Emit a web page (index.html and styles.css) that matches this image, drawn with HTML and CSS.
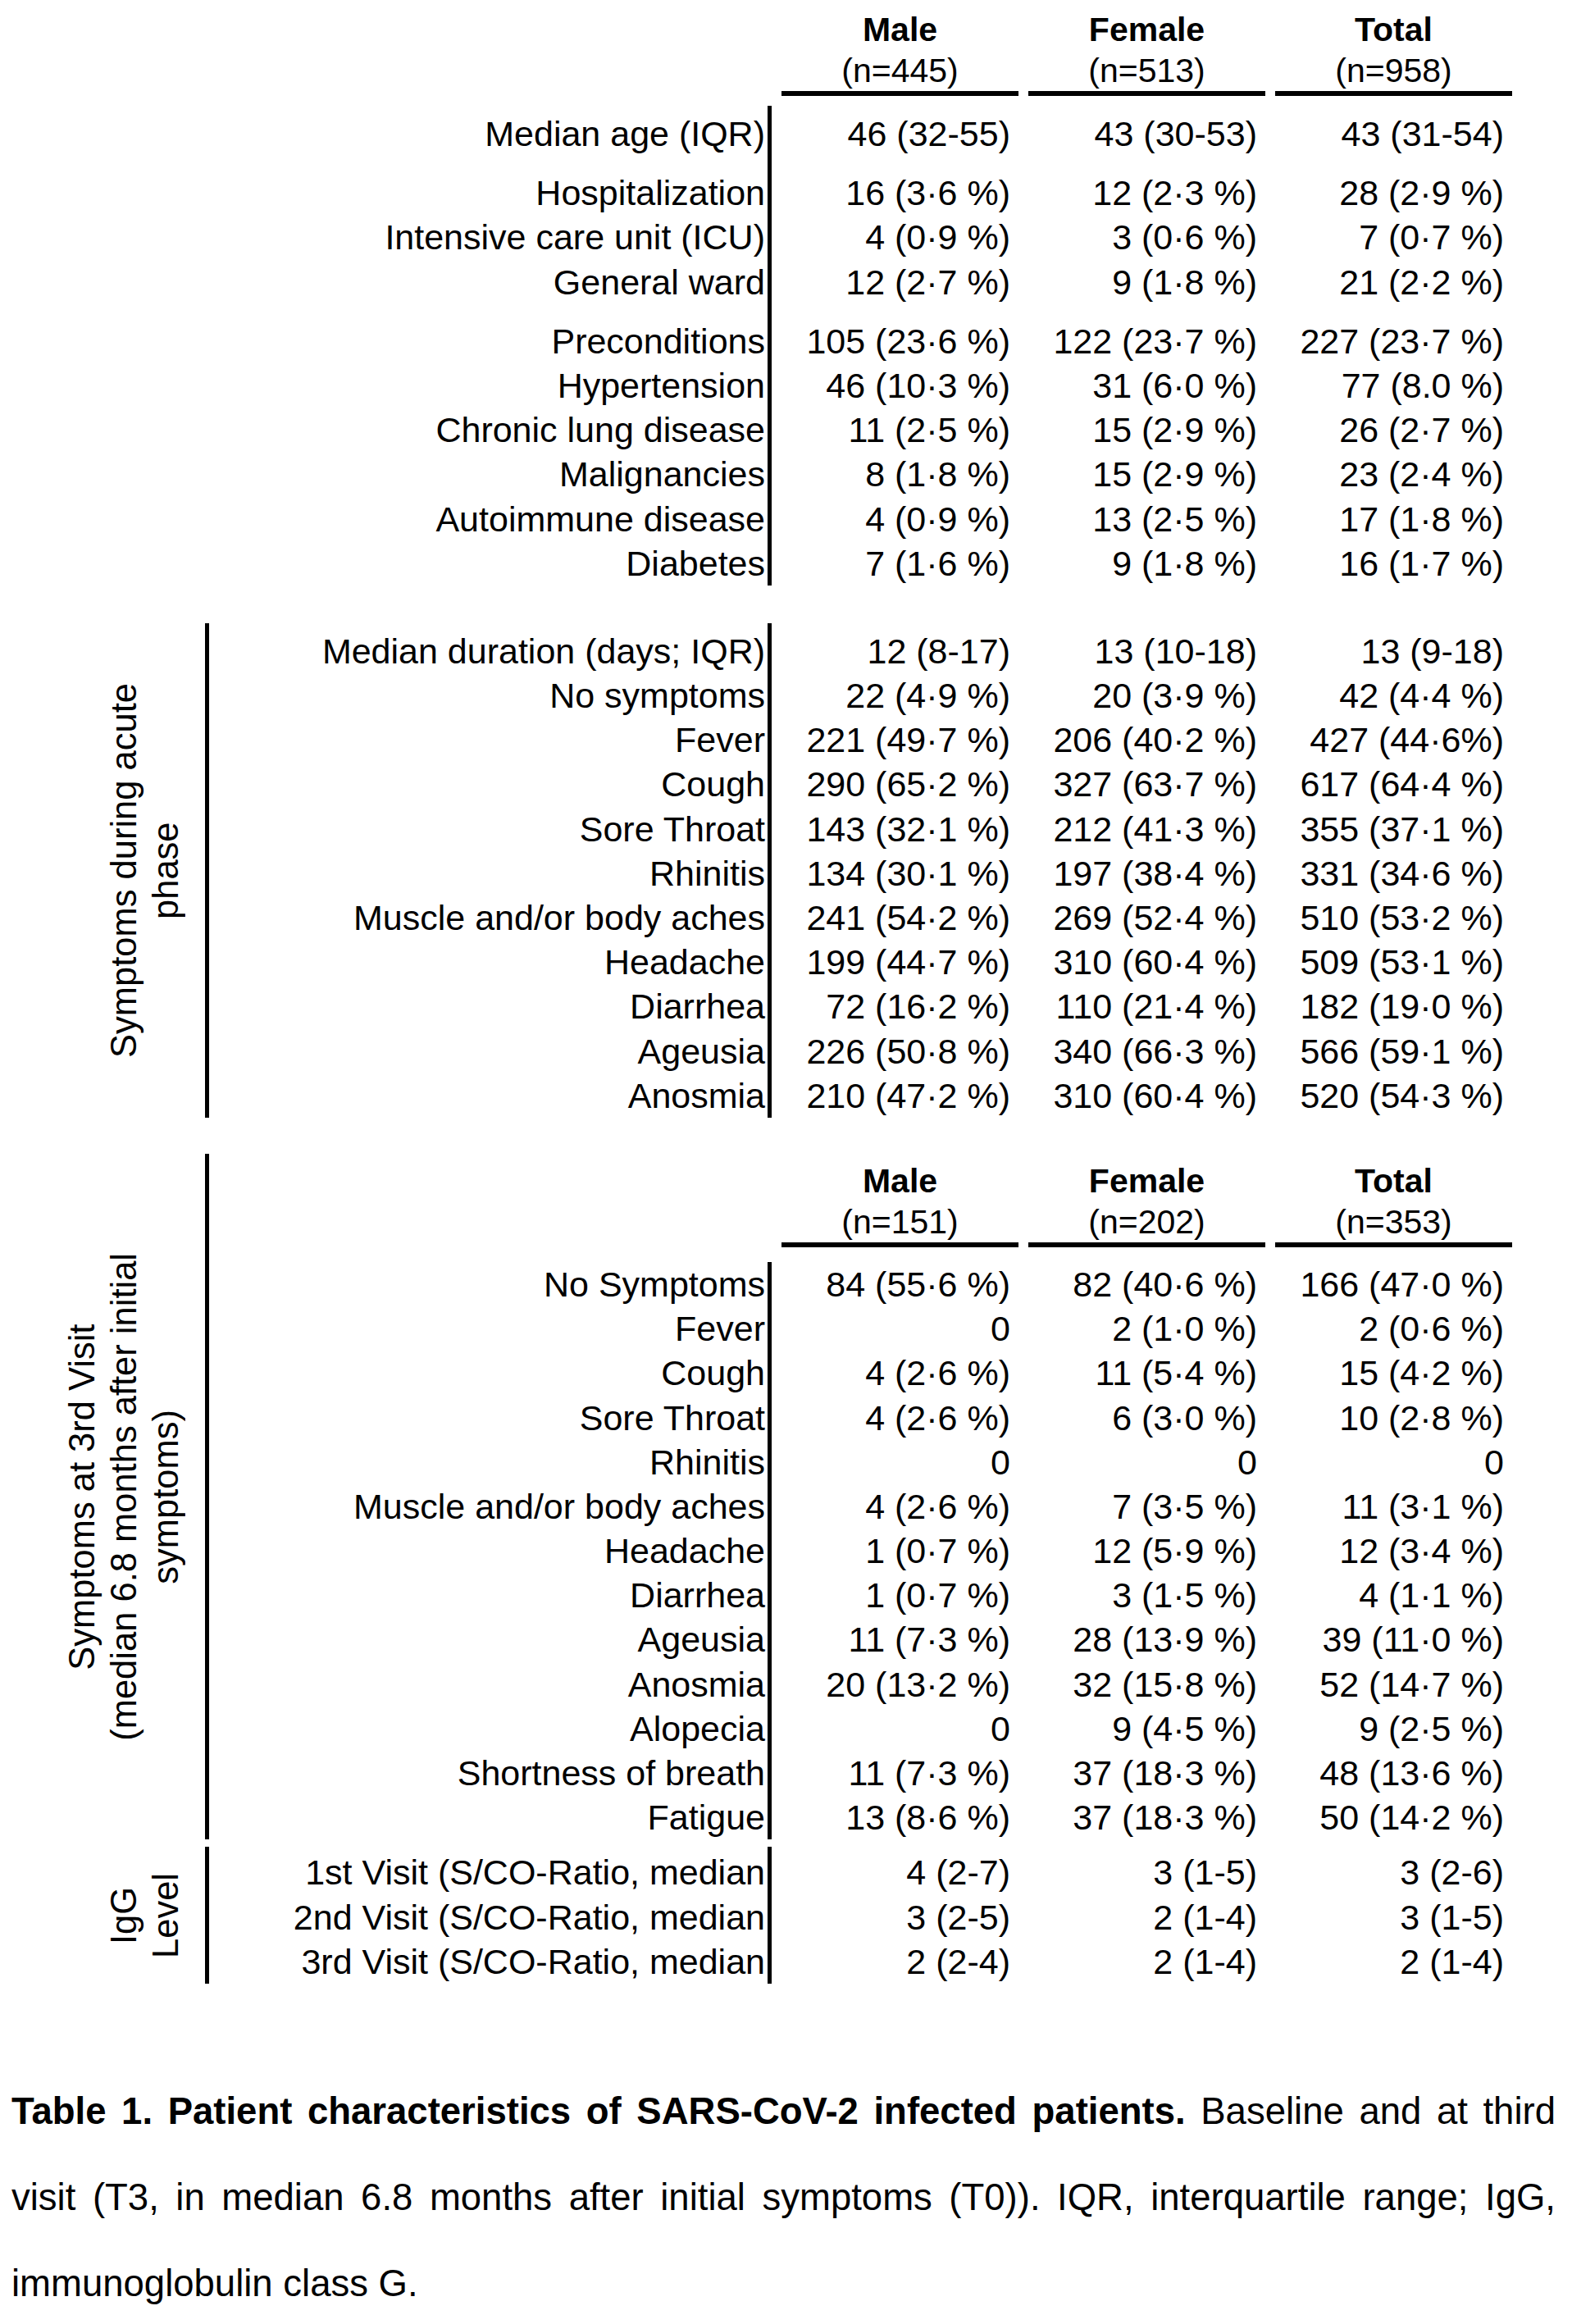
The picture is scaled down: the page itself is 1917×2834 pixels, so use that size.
FILE: index.html
```html
<!DOCTYPE html>
<html lang="en">
<head>
<meta charset="utf-8">
<title>Table 1. Patient characteristics</title>
<link rel="stylesheet" href="styles.css">
</head>
<body>
<div class="page">

  <section class="block block-base">
    <div class="group"></div>
    <div class="main">
      <div class="head">
        <div class="head-spacer"></div>
        <div class="hcell"><b>Male</b><br>(n=445)</div>
        <div class="hcell"><b>Female</b><br>(n=513)</div>
        <div class="hcell"><b>Total</b><br>(n=958)</div>
      </div>
      <div class="body body-base">
        <div class="labels">
          <div class="cell">Median age (IQR)</div>
          <div class="cell sep">Hospitalization</div>
          <div class="cell">Intensive care unit (ICU)</div>
          <div class="cell">General ward</div>
          <div class="cell sep">Preconditions</div>
          <div class="cell">Hypertension</div>
          <div class="cell">Chronic lung disease</div>
          <div class="cell">Malignancies</div>
          <div class="cell">Autoimmune disease</div>
          <div class="cell">Diabetes</div>
        </div>
        <div class="col">
          <div class="cell">46 (32-55)</div>
          <div class="cell sep">16 (3·6 %)</div>
          <div class="cell">4 (0·9 %)</div>
          <div class="cell">12 (2·7 %)</div>
          <div class="cell sep">105 (23·6 %)</div>
          <div class="cell">46 (10·3 %)</div>
          <div class="cell">11 (2·5 %)</div>
          <div class="cell">8 (1·8 %)</div>
          <div class="cell">4 (0·9 %)</div>
          <div class="cell">7 (1·6 %)</div>
        </div>
        <div class="col">
          <div class="cell">43 (30-53)</div>
          <div class="cell sep">12 (2·3 %)</div>
          <div class="cell">3 (0·6 %)</div>
          <div class="cell">9 (1·8 %)</div>
          <div class="cell sep">122 (23·7 %)</div>
          <div class="cell">31 (6·0 %)</div>
          <div class="cell">15 (2·9 %)</div>
          <div class="cell">15 (2·9 %)</div>
          <div class="cell">13 (2·5 %)</div>
          <div class="cell">9 (1·8 %)</div>
        </div>
        <div class="col">
          <div class="cell">43 (31-54)</div>
          <div class="cell sep">28 (2·9 %)</div>
          <div class="cell">7 (0·7 %)</div>
          <div class="cell">21 (2·2 %)</div>
          <div class="cell sep">227 (23·7 %)</div>
          <div class="cell">77 (8.0 %)</div>
          <div class="cell">26 (2·7 %)</div>
          <div class="cell">23 (2·4 %)</div>
          <div class="cell">17 (1·8 %)</div>
          <div class="cell">16 (1·7 %)</div>
        </div>
      </div>
    </div>
  </section>

  <section class="block block-acute">
    <div class="group ruled">
      <div class="vlabel">Symptoms during acute<br>phase</div>
    </div>
    <div class="main">
      <div class="body body-acute">
        <div class="labels">
          <div class="cell">Median duration (days; IQR)</div>
          <div class="cell">No symptoms</div>
          <div class="cell">Fever</div>
          <div class="cell">Cough</div>
          <div class="cell">Sore Throat</div>
          <div class="cell">Rhinitis</div>
          <div class="cell">Muscle and/or body aches</div>
          <div class="cell">Headache</div>
          <div class="cell">Diarrhea</div>
          <div class="cell">Ageusia</div>
          <div class="cell">Anosmia</div>
        </div>
        <div class="col">
          <div class="cell">12 (8-17)</div>
          <div class="cell">22 (4·9 %)</div>
          <div class="cell">221 (49·7 %)</div>
          <div class="cell">290 (65·2 %)</div>
          <div class="cell">143 (32·1 %)</div>
          <div class="cell">134 (30·1 %)</div>
          <div class="cell">241 (54·2 %)</div>
          <div class="cell">199 (44·7 %)</div>
          <div class="cell">72 (16·2 %)</div>
          <div class="cell">226 (50·8 %)</div>
          <div class="cell">210 (47·2 %)</div>
        </div>
        <div class="col">
          <div class="cell">13 (10-18)</div>
          <div class="cell">20 (3·9 %)</div>
          <div class="cell">206 (40·2 %)</div>
          <div class="cell">327 (63·7 %)</div>
          <div class="cell">212 (41·3 %)</div>
          <div class="cell">197 (38·4 %)</div>
          <div class="cell">269 (52·4 %)</div>
          <div class="cell">310 (60·4 %)</div>
          <div class="cell">110 (21·4 %)</div>
          <div class="cell">340 (66·3 %)</div>
          <div class="cell">310 (60·4 %)</div>
        </div>
        <div class="col">
          <div class="cell">13 (9-18)</div>
          <div class="cell">42 (4·4 %)</div>
          <div class="cell">427 (44·6%)</div>
          <div class="cell">617 (64·4 %)</div>
          <div class="cell">355 (37·1 %)</div>
          <div class="cell">331 (34·6 %)</div>
          <div class="cell">510 (53·2 %)</div>
          <div class="cell">509 (53·1 %)</div>
          <div class="cell">182 (19·0 %)</div>
          <div class="cell">566 (59·1 %)</div>
          <div class="cell">520 (54·3 %)</div>
        </div>
      </div>
    </div>
  </section>

  <section class="block block-visit">
    <div class="group ruled">
      <div class="vlabel">Symptoms at 3rd Visit<br>(median 6.8 months after initial<br>symptoms)</div>
    </div>
    <div class="main">
      <div class="head head-visit">
        <div class="head-spacer"></div>
        <div class="hcell"><b>Male</b><br>(n=151)</div>
        <div class="hcell"><b>Female</b><br>(n=202)</div>
        <div class="hcell"><b>Total</b><br>(n=353)</div>
      </div>
      <div class="body body-visit">
        <div class="labels">
          <div class="cell">No Symptoms</div>
          <div class="cell">Fever</div>
          <div class="cell">Cough</div>
          <div class="cell">Sore Throat</div>
          <div class="cell">Rhinitis</div>
          <div class="cell">Muscle and/or body aches</div>
          <div class="cell">Headache</div>
          <div class="cell">Diarrhea</div>
          <div class="cell">Ageusia</div>
          <div class="cell">Anosmia</div>
          <div class="cell">Alopecia</div>
          <div class="cell">Shortness of breath</div>
          <div class="cell">Fatigue</div>
        </div>
        <div class="col">
          <div class="cell">84 (55·6 %)</div>
          <div class="cell">0</div>
          <div class="cell">4 (2·6 %)</div>
          <div class="cell">4 (2·6 %)</div>
          <div class="cell">0</div>
          <div class="cell">4 (2·6 %)</div>
          <div class="cell">1 (0·7 %)</div>
          <div class="cell">1 (0·7 %)</div>
          <div class="cell">11 (7·3 %)</div>
          <div class="cell">20 (13·2 %)</div>
          <div class="cell">0</div>
          <div class="cell">11 (7·3 %)</div>
          <div class="cell">13 (8·6 %)</div>
        </div>
        <div class="col">
          <div class="cell">82 (40·6 %)</div>
          <div class="cell">2 (1·0 %)</div>
          <div class="cell">11 (5·4 %)</div>
          <div class="cell">6 (3·0 %)</div>
          <div class="cell">0</div>
          <div class="cell">7 (3·5 %)</div>
          <div class="cell">12 (5·9 %)</div>
          <div class="cell">3 (1·5 %)</div>
          <div class="cell">28 (13·9 %)</div>
          <div class="cell">32 (15·8 %)</div>
          <div class="cell">9 (4·5 %)</div>
          <div class="cell">37 (18·3 %)</div>
          <div class="cell">37 (18·3 %)</div>
        </div>
        <div class="col">
          <div class="cell">166 (47·0 %)</div>
          <div class="cell">2 (0·6 %)</div>
          <div class="cell">15 (4·2 %)</div>
          <div class="cell">10 (2·8 %)</div>
          <div class="cell">0</div>
          <div class="cell">11 (3·1 %)</div>
          <div class="cell">12 (3·4 %)</div>
          <div class="cell">4 (1·1 %)</div>
          <div class="cell">39 (11·0 %)</div>
          <div class="cell">52 (14·7 %)</div>
          <div class="cell">9 (2·5 %)</div>
          <div class="cell">48 (13·6 %)</div>
          <div class="cell">50 (14·2 %)</div>
        </div>
      </div>
    </div>
  </section>

  <section class="block block-igg">
    <div class="group ruled">
      <div class="vlabel">IgG<br>Level</div>
    </div>
    <div class="main">
      <div class="body body-igg">
        <div class="labels">
          <div class="cell">1st Visit (S/CO-Ratio, median</div>
          <div class="cell">2nd Visit (S/CO-Ratio, median</div>
          <div class="cell">3rd Visit (S/CO-Ratio, median</div>
        </div>
        <div class="col">
          <div class="cell">4 (2-7)</div>
          <div class="cell">3 (2-5)</div>
          <div class="cell">2 (2-4)</div>
        </div>
        <div class="col">
          <div class="cell">3 (1-5)</div>
          <div class="cell">2 (1-4)</div>
          <div class="cell">2 (1-4)</div>
        </div>
        <div class="col">
          <div class="cell">3 (2-6)</div>
          <div class="cell">3 (1-5)</div>
          <div class="cell">2 (1-4)</div>
        </div>
      </div>
    </div>
  </section>

  <p class="caption"><b>Table 1. Patient characteristics of SARS-CoV-2 infected patients.</b> Baseline and at third visit (T3, in median 6.8 months after initial symptoms (T0)). IQR, interquartile range; IgG, immunoglobulin class G.</p>

</div>
</body>
</html>
```

FILE: styles.css
```css
html, body {
  margin: 0;
  padding: 0;
  background: #ffffff;
}

body {
  font-family: "Liberation Sans", Arial, sans-serif;
  color: #000000;
  font-size: 43px;
}

.page {
  width: 1917px;
}

/* ---------- blocks ---------- */
.block {
  display: flex;
  align-items: stretch;
}

.block-base {
  padding-top: 11px;
}

.block-acute {
  margin-top: 46px;
}

.block-visit {
  margin-top: 44px;
}

.block-igg {
  margin-top: 9px;
}

/* ---------- group (rotated) column ---------- */
.group {
  flex: none;
  width: 255px;
  box-sizing: border-box;
  display: flex;
  align-items: center;
  justify-content: flex-end;
  padding-right: 22px;
}

.group.ruled {
  border-right: 5px solid #000000;
}

.vlabel {
  writing-mode: vertical-rl;
  transform: rotate(180deg);
  text-align: center;
  font-size: 43.5px;
  line-height: 51px;
  white-space: nowrap;
}

/* ---------- main area ---------- */
.main {
  display: flex;
  flex-direction: column;
}

.head {
  display: grid;
  grid-template-columns: 692px repeat(3, 301px);
}

.head-visit {
  padding-top: 8px;
}

.hcell {
  margin: 0 6px;
  border-bottom: 6px solid #000000;
  text-align: center;
  font-size: 41px;
  line-height: 50px;
  white-space: nowrap;
}

.hcell b {
  font-weight: 700;
}

/* ---------- body columns ---------- */
.body {
  display: flex;
}

.body-base {
  margin-top: 12px;
}

.body-base > *,
.body-acute > * {
  padding-top: 7px;
}

.body-visit {
  margin-top: 18px;
}

.body-igg > * {
  padding-top: 4px;
}

.labels {
  flex: none;
  width: 686px;
  box-sizing: border-box;
  border-right: 5px solid #000000;
  padding-right: 3px;
  margin-right: 6px;
  text-align: right;
}

.col {
  flex: none;
  width: 301px;
  box-sizing: border-box;
  padding-right: 16px;
  text-align: right;
}

.cell {
  height: 54.2px;
  line-height: 54.2px;
  white-space: nowrap;
}

.cell.sep {
  margin-top: 18px;
}

/* ---------- caption ---------- */
.caption {
  margin: 103px 0 0 14px;
  width: 1883px;
  font-size: 45.5px;
  line-height: 105px;
  text-align: justify;
}

.caption b {
  font-weight: 700;
}
```
